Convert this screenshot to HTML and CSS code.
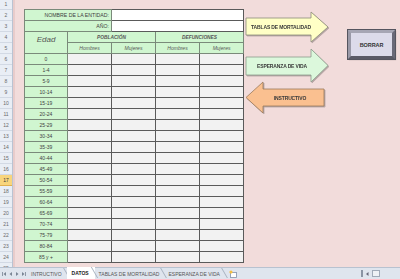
FILE: index.html
```html
<!DOCTYPE html>
<html lang="es">
<head>
    <meta charset="UTF-8">
    <title>DATOS</title>
    <link rel="stylesheet" href="styles.css">
</head>
<body>
<div class="app">
    <div class="grid">
        <!-- numeros de fila -->
        <div class="rownums">
            <div class="rn first">1</div>
            <div class="rn">2</div><div class="rn">3</div><div class="rn">4</div><div class="rn">5</div>
            <div class="rn">6</div><div class="rn">7</div><div class="rn">8</div><div class="rn">9</div>
            <div class="rn">10</div><div class="rn">11</div><div class="rn">12</div><div class="rn">13</div>
            <div class="rn">14</div><div class="rn">15</div><div class="rn">16</div>
            <div class="rn sel">17</div>
            <div class="rn">18</div><div class="rn">19</div><div class="rn">20</div><div class="rn">21</div>
            <div class="rn">22</div><div class="rn">23</div><div class="rn">24</div><div class="rn">25</div>
        </div>
        <!-- hoja -->
        <div class="sheet">
            <table class="datos">
                <colgroup>
                    <col class="c-edad"><col class="c-num"><col class="c-num"><col class="c-num"><col class="c-num">
                </colgroup>
                <tr>
                    <td colspan="2" class="verde label">NOMBRE DE LA ENTIDAD:</td>
                    <td colspan="3" class="blanco"></td>
                </tr>
                <tr>
                    <td colspan="2" class="verde label">AÑO:</td>
                    <td colspan="3" class="blanco"></td>
                </tr>
                <tr>
                    <td rowspan="2" class="verde edad">Edad</td>
                    <td colspan="2" class="verde grupo">POBLACIÓN</td>
                    <td colspan="2" class="verde grupo">DEFUNCIONES</td>
                </tr>
                <tr>
                    <td class="verde sexo">Hombres</td>
                    <td class="verde sexo">Mujeres</td>
                    <td class="verde sexo">Hombres</td>
                    <td class="verde sexo">Mujeres</td>
                </tr>
                <tr><td class="verde age">0</td><td></td><td></td><td></td><td></td></tr>
                <tr><td class="verde age">1-4</td><td></td><td></td><td></td><td></td></tr>
                <tr><td class="verde age">5-9</td><td></td><td></td><td></td><td></td></tr>
                <tr><td class="verde age">10-14</td><td></td><td></td><td></td><td></td></tr>
                <tr><td class="verde age">15-19</td><td></td><td></td><td></td><td></td></tr>
                <tr><td class="verde age">20-24</td><td></td><td></td><td></td><td></td></tr>
                <tr><td class="verde age">25-29</td><td></td><td></td><td></td><td></td></tr>
                <tr><td class="verde age">30-34</td><td></td><td></td><td></td><td></td></tr>
                <tr><td class="verde age">35-39</td><td></td><td></td><td></td><td></td></tr>
                <tr><td class="verde age">40-44</td><td></td><td></td><td></td><td></td></tr>
                <tr><td class="verde age">45-49</td><td></td><td></td><td></td><td></td></tr>
                <tr><td class="verde age">50-54</td><td></td><td></td><td></td><td></td></tr>
                <tr><td class="verde age">55-59</td><td></td><td></td><td></td><td></td></tr>
                <tr><td class="verde age">60-64</td><td></td><td></td><td></td><td></td></tr>
                <tr><td class="verde age">65-69</td><td></td><td></td><td></td><td></td></tr>
                <tr><td class="verde age">70-74</td><td></td><td></td><td></td><td></td></tr>
                <tr><td class="verde age">75-79</td><td></td><td></td><td></td><td></td></tr>
                <tr><td class="verde age">80-84</td><td></td><td></td><td></td><td></td></tr>
                <tr><td class="verde age">85 y +</td><td></td><td></td><td></td><td></td></tr>
            </table>

            <!-- formas sobre la hoja -->
            <svg class="shape arrow-tablas" width="84" height="32" viewBox="-1 -1 84 32">
                <polygon points="0,6 65,6 65,0 82,15 65,30 65,23 0,23" fill="#ffffc6" stroke="#8a8a7a" stroke-width="0.8"/>
                <text x="35" y="17" text-anchor="middle">TABLAS DE MORTALIDAD</text>
            </svg>
            <svg class="shape arrow-esperanza" width="84" height="35" viewBox="-1 -1 84 35">
                <polygon points="0,8 65,8 65,0 82,16.5 65,33 65,26 0,26" fill="#dcf8dc" stroke="#8a9a8a" stroke-width="0.8"/>
                <text x="36" y="19" text-anchor="middle">ESPERANZA DE VIDA</text>
            </svg>
            <svg class="shape arrow-instructivo" width="80" height="32" viewBox="-1 -1 80 32">
                <polygon points="0,15.5 17,0 17,7 78,7 78,24 17,24 17,31" fill="#fac090" stroke="#9a7a5a" stroke-width="0.8"/>
                <text x="44" y="17.5" text-anchor="middle">INSTRUCTIVO</text>
            </svg>
            <div class="shape borrar">BORRAR</div>
        </div>
    </div>

    <!-- pestañas -->
    <div class="tabs">
        <div class="nav">
            <svg width="26" height="6" viewBox="0 0 26 6">
                <rect x="1" y="1" width="0.8" height="4" fill="#7a8594"/>
                <polygon points="5,1 5,5 2.5,3" fill="#7a8594"/>
                <polygon points="11,1 11,5 8.5,3" fill="#7a8594"/>
                <polygon points="15,1 15,5 17.5,3" fill="#7a8594"/>
                <polygon points="21,1 21,5 23.5,3" fill="#7a8594"/>
                <rect x="24" y="1" width="0.8" height="4" fill="#7a8594"/>
            </svg>
        </div>
        <div class="tab t-instr">INTRUCTIVO</div>
        <div class="tab active">DATOS</div>
        <div class="tab">TABLAS DE MORTALIDAD</div>
        <div class="tab">ESPERANZA DE VIDA</div>
        <div class="tab newsheet">
            <svg width="9" height="8" viewBox="0 0 9 8">
                <rect x="1.5" y="2.5" width="6" height="5" fill="#fff" stroke="#8090a8" stroke-width="0.8"/>
                <circle cx="2" cy="2" r="1.6" fill="#f5c040"/>
            </svg>
        </div>
        <div class="hscroll">
            <span class="split"></span>
            <svg width="5" height="6" viewBox="0 0 5 6">
                <polygon points="3.5,1 3.5,5 1,3" fill="#667"/>
            </svg>
            <span class="sbtn"></span>
        </div>
    </div>
</div>
</body>
</html>
```

FILE: styles.css
```css
:root{
    --pink: #f2dcdb;
    --green: #d0f6d0;
    --cell: #f2f2f2;
    --line: #5a5a5a;
    --text: #404040;
}
html, body{
    margin: 0;
    padding: 0;
}
body{
    width: 400px;
    height: 279px;
    overflow: hidden;
    font-family: "Liberation Sans", Arial, sans-serif;
    color: var(--text);
}
.app{
    display: flex;
    flex-direction: column;
    height: 279px;
}
.grid{
    display: flex;
    height: 267px;
    overflow: hidden;
}
.rownums{
    width: 13px;
    flex: 0 0 13px;
    background: #e9eef5;
    border-right: 1px solid #b9c3d2;
    box-sizing: border-box;
}
.rn{
    height: 11px;
    box-sizing: border-box;
    border-bottom: 1px solid #d2d9e4;
    font-size: 5px;
    line-height: 10px;
    text-align: center;
    color: #6a6a6a;
}
.rn.first{
    height: 10px;
    line-height: 9px;
}
.rn.sel{
    background: #f8d57c;
    color: #3a3a3a;
    border-bottom-color: #e0b050;
}
.sheet{
    flex: 1;
    position: relative;
    background: var(--pink);
    padding: 9px 0 0 9px;
    border-left: 2px solid #e8cccb;
}
.datos{
    border-collapse: collapse;
    table-layout: fixed;
    width: 220px;
}
.c-edad{ width: 43px; }
.c-num{ width: 44px; }
.datos tr{
    height: 11px;
}
.datos td{
    padding: 0;
    height: 10px;
    border: 1px solid var(--line);
    background: var(--cell);
    font-size: 5px;
    line-height: 9px;
    text-align: center;
    color: var(--text);
    white-space: nowrap;
    overflow: hidden;
}
.datos td.verde{
    background: var(--green);
    border-color: #7a8a7a;
}
.datos td.blanco{
    background: #ffffff;
}
.datos td.label{
    text-align: right;
    padding-right: 2px;
    font-size: 5.2px;
}
.datos td.edad{
    font-style: italic;
    font-size: 8px;
    color: #555;
    vertical-align: top;
    padding-top: 3px;
}
.datos td.grupo{
    font-style: italic;
    font-weight: bold;
    font-size: 4.8px;
    color: #555;
}
.datos td.sexo{
    font-style: italic;
    font-size: 5px;
    color: #555;
}
.datos td.age{
    font-size: 5px;
}

/* formas */
.shape{
    position: absolute;
}
.shape text{
    font-family: "Liberation Sans", Arial, sans-serif;
    font-weight: bold;
    font-size: 5px;
    fill: #3a3a3a;
    letter-spacing: -0.15px;
}
.arrow-tablas{
    left: 230px;
    top: 11px;
    filter: drop-shadow(1px 1px 0.6px rgba(0,0,0,.25));
}
.arrow-esperanza{
    left: 230px;
    top: 48px;
    filter: drop-shadow(1px 1px 0.6px rgba(0,0,0,.25));
}
.arrow-instructivo{
    left: 230px;
    top: 81px;
    filter: drop-shadow(1px 1px 0.6px rgba(0,0,0,.25));
}
.borrar{
    left: 333px;
    top: 30px;
    width: 47px;
    height: 29px;
    box-sizing: border-box;
    border: 3px solid;
    border-color: #a6a6b4 #6a6a78 #5a5a66 #9a9aa8;
    outline: 1px solid #55555f;
    background: #dcdbea;
    display: flex;
    align-items: center;
    justify-content: center;
    font-size: 5.5px;
    font-weight: bold;
    color: #333;
    letter-spacing: -0.1px;
    box-shadow: 1px 1px 1px rgba(0,0,0,.3);
}

/* pestañas */
.tabs{
    height: 12px;
    display: flex;
    align-items: stretch;
    background: #dfe5ee;
    border-top: 1px solid #b8c2d0;
    box-sizing: border-box;
    font-size: 5px;
    color: #555;
}
.nav{
    width: 28px;
    display: flex;
    align-items: center;
    padding-left: 1px;
    box-sizing: border-box;
}
.tab{
    display: flex;
    align-items: center;
    padding: 0 5px 0 4px;
    position: relative;
    white-space: nowrap;
}
.tab::after{
    content: "";
    position: absolute;
    right: 0;
    top: 0;
    bottom: 1px;
    border-right: 1px solid #a8b2c0;
    transform: skewX(30deg);
}
.t-instr{
    padding-left: 3px;
}
.tab.active{
    background: #ffffff;
    color: #222;
    font-weight: bold;
    margin-top: -1px;
    padding: 0 6px 0 5px;
}
.newsheet{
    padding: 0 4px;
}
.newsheet::after{
    display: none;
}
.hscroll{
    margin-left: auto;
    display: flex;
    align-items: center;
    gap: 2px;
    padding-right: 20px;
}
.split{
    width: 2px;
    height: 7px;
    border: 1px solid #8a94a4;
    box-sizing: border-box;
    background: #fff;
}
.sbtn{
    width: 8px;
    height: 7px;
    border: 1px solid #a0aab8;
    box-sizing: border-box;
    background: #eef1f5;
}
```
